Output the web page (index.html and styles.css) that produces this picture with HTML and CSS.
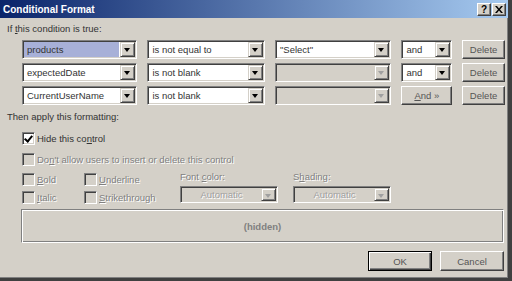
FILE: index.html
```html
<!DOCTYPE html>
<html lang="en">
<head>
    <meta charset="UTF-8">
    <title>Conditional Format</title>
    <link rel="stylesheet" href="styles.css">
</head>
<body>
    <div class="window">
        <div class="title-bar">
            <span class="title">Conditional Format</span>
            <div class="title-btns">
                <span class="tbtn">?</span>
                <span class="tbtn close">
                    <svg width="8" height="7" viewBox="0 0 8 7"><path d="M0 0h2l2 2.5L6 0h2L5 3.5 8 7H6L4 4.5 2 7H0l3-3.5z" fill="#000"/></svg>
                </span>
            </div>
        </div>
        <div class="content">
            <p class="label">If <u>t</u>his condition is true:</p>
            <section class="conditions">
                <div class="cond-row">
                    <div class="combo c1 selected"><span class="val">products</span><span class="arrow"></span></div>
                    <div class="combo c2"><span class="val">is not equal to</span><span class="arrow"></span></div>
                    <div class="combo c3"><span class="val">"Select"</span><span class="arrow"></span></div>
                    <div class="combo c4"><span class="val">and</span><span class="arrow"></span></div>
                    <button class="btn del">Delete</button>
                </div>
                <div class="cond-row">
                    <div class="combo c1"><span class="val">expectedDate</span><span class="arrow"></span></div>
                    <div class="combo c2"><span class="val">is not blank</span><span class="arrow"></span></div>
                    <div class="combo c3 disabled"><span class="val"></span><span class="arrow"></span></div>
                    <div class="combo c4"><span class="val">and</span><span class="arrow"></span></div>
                    <button class="btn del">Delete</button>
                </div>
                <div class="cond-row">
                    <div class="combo c1"><span class="val">CurrentUserName</span><span class="arrow"></span></div>
                    <div class="combo c2"><span class="val">is not blank</span><span class="arrow"></span></div>
                    <div class="combo c3 disabled"><span class="val"></span><span class="arrow"></span></div>
                    <button class="btn and-btn"><u>A</u>nd &raquo;</button>
                    <button class="btn del">Delete</button>
                </div>
            </section>
            <p class="label apply">Then apply this formatting:</p>
            <section class="format">
                <label class="check"><span class="box checked"></span><span>Hide this co<u>n</u>trol</span></label>
                <label class="check off"><span class="box"></span><span>Do<u>n</u>'t allow users to insert or delete this control</span></label>
                <div class="style-grid">
                    <div class="style-col">
                        <label class="check off"><span class="box"></span><span><u>B</u>old</span></label>
                        <label class="check off"><span class="box"></span><span><u>I</u>talic</span></label>
                    </div>
                    <div class="style-col">
                        <label class="check off"><span class="box"></span><span><u>U</u>nderline</span></label>
                        <label class="check off"><span class="box"></span><span><u>S</u>trikethrough</span></label>
                    </div>
                    <div class="pick">
                        <span class="pick-label">Font <u>c</u>olor:</span>
                        <div class="combo picker disabled"><span class="val">Automatic</span><span class="arrow"></span></div>
                    </div>
                    <div class="pick">
                        <span class="pick-label">S<u>h</u>ading:</span>
                        <div class="combo picker disabled"><span class="val">Automatic</span><span class="arrow"></span></div>
                    </div>
                </div>
                <div class="preview">(hidden)</div>
            </section>
            <div class="actions">
                <button class="btn default">OK</button>
                <button class="btn">Cancel</button>
            </div>
        </div>
    </div>
</body>
</html>
```
FILE: styles.css
```css
*{margin: 0;padding: 0;box-sizing: border-box}
body{background: #d4d0c8;font-family: "Liberation Sans", Arial, sans-serif;font-size: 9.5px;color: #333;}
u{text-decoration: underline;}

.window{width: 512px;height: 281px;display: flex;flex-direction: column;border-right: 4px solid #404040;border-bottom: 3px solid #404040;box-shadow: inset -1px -1px #808080;}
.title-bar{height: 18px;display: flex;align-items: center;justify-content: space-between;padding: 0 2px 0 3px;background: linear-gradient(to right, #0a246a, #a6caf0);}
.title{color: #fff;font-weight: bold;font-size: 10px;}
.title-btns{display: flex;gap: 1px;}
.tbtn{width: 14px;height: 13px;display: flex;align-items: center;justify-content: center;background: #d4d0c8;border: 1px solid;border-color: #fff #404040 #404040 #fff;box-shadow: inset -1px -1px #808080;font-weight: bold;font-size: 10px;color: #000;}

.content{flex: 1;padding: 0 3px 0 7px;}
.label{height: 22px;padding-top: 5px;line-height: 12px;}
.conditions{display: flex;flex-direction: column;gap: 4px;padding: 0 0 0 15px;}
.cond-row{display: flex;gap: 10px;height: 19px;}

.combo{display: flex;height: 19px;border: 1px solid;border-color: #808080 #fff #fff #808080;box-shadow: inset 1px 1px #404040, inset -1px -1px #d4d0c8;padding: 1px;background: #fff;}
.combo .val{flex: 1;padding: 0 3px;line-height: 15px;white-space: nowrap;overflow: hidden;color: #333;}
.combo .arrow{width: 15px;height: 15px;position: relative;background: #d4d0c8;border: 1px solid;border-color: #d4d0c8 #404040 #404040 #d4d0c8;box-shadow: inset 1px 1px #fff, inset -1px -1px #808080;}
.combo .arrow::after{content: "";position: absolute;left: 3px;top: 5px;border-left: 3.5px solid transparent;border-right: 3.5px solid transparent;border-top: 4px solid #000;}
.combo.selected .val{background: #a7b0d8;margin-right: 1px;}
.combo.disabled{background: #d4d0c8;}
.combo.disabled .val{color: #a0a0a0;text-align: center;text-shadow: 1px 1px #fff;}
.combo.disabled .arrow::after{border-top-color: #a0a0a0;}
.c1{width: 116px;}
.c2{width: 118px;}
.c3{width: 117px;}
.c4{width: 51px;}

.btn{font-family: inherit;font-size: 9.5px;color: #555;background: #d4d0c8;border: 1px solid;border-color: #fff #404040 #404040 #fff;box-shadow: inset -1px -1px #808080;height: 19px;}
.del{width: 43px;margin-left: auto;}
.and-btn{width: 51px;}

.apply{height: 24px;padding-top: 6px;}
.format{padding-left: 15px;display: flex;flex-direction: column;}
.check{display: flex;align-items: center;gap: 2px;height: 18px;}
.box{width: 13px;height: 13px;background: #fff;border: 1px solid;border-color: #808080 #fff #fff #808080;box-shadow: inset 1px 1px #404040, inset -1px -1px #d4d0c8;position: relative;}
.box.checked::after{content: "";position: absolute;left: 3px;top: 1px;width: 3px;height: 6px;border: solid #000;border-width: 0 2px 2px 0;transform: rotate(40deg);}
.check.off .box{background: #d4d0c8;}
.check.off span{color: #808080;text-shadow: 1px 1px #fff;}
.format > .check:nth-child(2){margin-top: 3px;}

.style-grid{display: flex;margin-top: 2px;height: 36px;}
.style-col{display: flex;flex-direction: column;width: 62px;}
.style-col + .style-col{width: 96px;}
.pick{display: flex;flex-direction: column;width: 113px;padding-top: 1px;}
.pick-label{color: #808080;text-shadow: 1px 1px #fff;height: 15px;}
.picker{width: 98px;height: 17px;}
.picker .arrow{height: 13px;}
.picker .val{line-height: 13px;}

.preview{margin: 3px 0 0 -1px;width: 483px;height: 34px;display: flex;align-items: center;justify-content: center;border: 1px solid;border-color: #808080 #fff #fff #808080;box-shadow: inset 1px 1px #fff, inset -1px -1px #808080;color: #808080;font-weight: bold;}

.actions{display: flex;justify-content: flex-end;gap: 8px;padding: 8px 1px 0 0;}
.actions .btn{width: 64px;height: 20px;}
.actions .default{border: 1px solid #000;box-shadow: inset 1px 1px #fff, inset -1px -1px #404040, inset -2px -2px #808080;}
```
